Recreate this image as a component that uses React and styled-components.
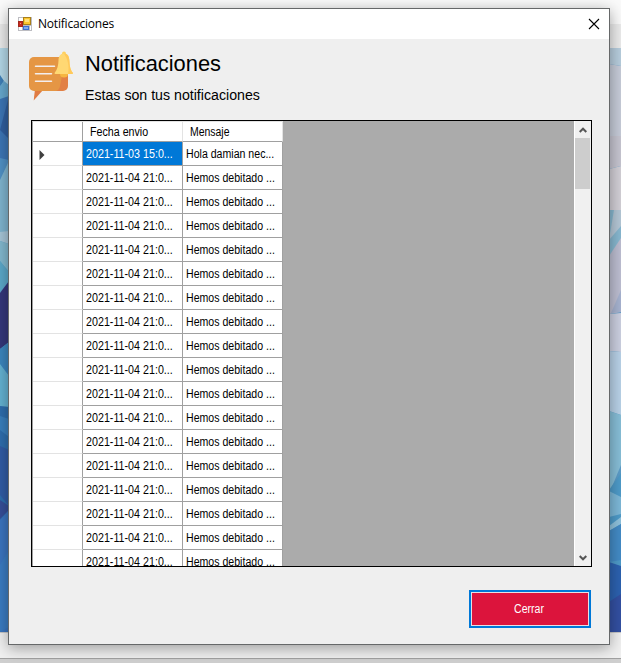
import React from "react";
import styled, { createGlobalStyle } from "styled-components";

const Global = createGlobalStyle`
  * { box-sizing: border-box; }
  body { margin: 0; overflow: hidden; font-family: "Liberation Sans", Arial, sans-serif; color: #000; }
`;

const Desktop = styled.div`
  position: relative;
  width: 621px;
  height: 663px;
  overflow: hidden;
  display: flex;
  flex-direction: column;
`;
const Strip = styled.div`
  height: ${(p) => p.$h}px;
  flex: none;
  background: ${(p) => p.$bg};
`;
const Wallpaper = styled.svg`
  display: block;
  flex: none;
  background: #5c9cc8;
`;

const Dialog = styled.section`
  position: absolute;
  left: 8px;
  top: 8px;
  width: 602px;
  height: 637px;
  border: 1px solid #666869;
  background: #efefef;
  box-shadow: 0 3px 14px rgba(0, 0, 0, 0.36);
  display: flex;
  flex-direction: column;
`;
const TitleBar = styled.header`
  height: 30px;
  flex: none;
  background: #fff;
  display: flex;
  align-items: center;
  padding: 0 9px;
`;
const Caption = styled.span`
  flex: 1;
  margin-left: 6px;
  font: 12px/16px "Open Sans", sans-serif;
  letter-spacing: -0.2px;
`;
const Heading = styled.div`
  height: 81px;
  flex: none;
  display: flex;
  padding: 11px 0 0 18px;
`;
const HeadingText = styled.div`
  padding-left: 11px;
`;
const Squeeze = styled.span`
  display: inline-block;
  white-space: pre;
  transform: scaleX(${(p) => p.$x || 1});
  transform-origin: ${(p) => p.$from || "left"} center;
`;
const Title = styled.h1`
  margin: 0;
  font-size: 22px;
  font-weight: 400;
  line-height: 28px;
`;
const Subtitle = styled.p`
  margin: 7px 0 0;
  font-size: 14.7px;
  line-height: 20px;
`;

const Grid = styled.div`
  width: 561px;
  height: 447px;
  flex: none;
  margin-left: 22px;
  border: 1px solid #000;
  background: #ababab;
  display: flex;
  justify-content: space-between;
  overflow: hidden;
`;
const Table = styled.div`
  width: 251px;
  border-left: 1px solid #a0a0a0;
  border-top: 1px solid #e3e3e3;
`;
const Row = styled.div`
  display: grid;
  grid-template-columns: 50px 100px 100px;
  grid-template-rows: 100%;
  height: ${(p) => (p.$head ? 20 : 24)}px;
  background: #fff;
  font-size: 12px;
  line-height: ${(p) => (p.$head ? 20 : 24)}px;
`;
const HeadCell = styled.div`
  padding-left: 7px;
  border-right: 1px solid ${(p) => p.$line || "#e3e3e3"};
  border-bottom: 1px solid #a0a0a0;
`;
const RowHeader = styled.div`
  padding: 8px 0 0 6px;
  border-right: 1px solid #a0a0a0;
  border-bottom: 1px solid #e3e3e3;
  line-height: 0;
`;
const Cell = styled.div`
  padding-left: 3px;
  overflow: hidden;
  border-right: 1px solid #a0a0a0;
  border-bottom: 1px solid #a0a0a0;
  background: ${(p) => (p.$selected ? "#0078d7" : "#fff")};
  color: ${(p) => (p.$selected ? "#fff" : "#000")};
`;
const ScrollBar = styled.div`
  width: 17px;
  background: #f0f0f0;
  border-left: 1px solid #fff;
  display: flex;
  flex-direction: column;
`;
const Arrow = styled.div`
  height: 17px;
  display: flex;
  align-items: center;
  justify-content: center;
`;
const Thumb = styled.div`
  height: 51px;
  width: 15px;
  background: #cdcdcd;
`;
const Gap = styled.div`
  flex: 1;
`;
const Footer = styled.footer`
  display: flex;
  justify-content: flex-end;
  padding: 23px 18px 0 0;
`;
const CloseButton = styled.button`
  width: 122px;
  height: 38px;
  padding: 0 2px 0 0;
  border: 2px solid #0078d7;
  background: #dc143c;
  box-shadow: inset 0 0 0 1px #e8dfe3;
  color: #fff;
  font: 12px "Liberation Sans", Arial, sans-serif;
`;

const AppIcon = () => (
  <svg width="14" height="14" viewBox="0 0 14 14" shapeRendering="crispEdges">
    <path d="M0 0h14v14H0z" fill="#bdbdc2" />
    <path d="M1 1h4v3H1zM1 10h3v3H1zM12 9h1v4h-1z" fill="#fff" />
    <path d="M0 4h5v6H0z" fill="#a3271c" />
    <path d="M1 5h3v4H1z" fill="#c8291c" />
    <path d="M2 6h1v1H2z" fill="#f39a80" />
    <path d="M5 0h8v8H5z" fill="#a9801a" />
    <path d="M6 1h6v6H6z" fill="#fcc62e" />
    <path d="M7 2h4v3H7z" fill="#ffe07a" />
    <path d="M5 9h6v4H5z" fill="#3c70d0" />
    <path d="M6 10h4v2H6z" fill="#7faaf0" />
  </svg>
);

const BellIcon = () => (
  <svg width="47" height="52" viewBox="27 50 47 52">
    <path d="M35 89L33.700 100.500L43 90z" fill="#e07b43" />
    <path d="M60 57h3a5 5 0 0 1 5 5v24a5 5 0 0 1-5 5h-8z" fill="#e28045" />
    <path d="M34 57h28v19l-2 10q-1 5-5 5H34a5 5 0 0 1-5-5V62a5 5 0 0 1 5-5z" fill="#e59644" />
    <path d="M35.5 66.3h19M35.5 73.7h16M35.5 81.3h16" stroke="#f3eeee" strokeWidth="1.5" strokeLinecap="round" />
    <path d="M60 74h8a4 3.5 0 0 1-8 0z" fill="#f7b641" />
    <circle cx="64" cy="53.3" r="1.9" fill="#ffd15c" />
    <path d="M64 53.5c-4 0-5.3 3-5.5 7-.2 5-1 9-4 12.500q0 1 1 1H72q1 0 1-1c-3-3.500-3.300-7.500-3.600-12.500-.3-4-1.400-7-5.400-7z" fill="#ffd873" />
    <path d="M64 53.500c4 0 5.100 3 5.400 7 .3 5 .6 9 3.600 12.500q0 1-1 1h-4c1.500-8 0-14-4-20.500z" fill="#ffc95a" />
  </svg>
);

const shapes = [
  ["#b4d8e8", "0,48 9,48 9,84 0,84"],
  ["#3f7fb8", "0,75 4,81 0,87"],
  ["#67a9cf", "0,86 4,81 9,85 9,97 0,100"],
  ["#3d76b6", "0,99 9,96 9,161 0,160"],
  ["#305f9f", "9,96 9,139 0,130"],
  ["#5091c6", "0,158 9,160 0,181"],
  ["#80b5d0", "0,180 9,161 9,232 0,232"],
  ["#a7c6d8", "0,232 9,231 9,244 0,241"],
  ["#83b9cf", "0,241 9,244 9,272 0,261"],
  ["#5ca9ca", "0,261 9,272 9,281 0,292"],
  ["#34377b", "0,293 9,281 9,342 0,349"],
  ["#3c86be", "0,349 9,342 9,377 0,365"],
  ["#64b2d2", "0,364 9,376 9,407 0,406"],
  ["#2e6eae", "0,406 9,407 9,632 0,632"],
  ["#397fbd", "0,416 9,419 9,437 0,430"],
  ["#315ca5", "0,446 9,450 9,506 0,495"],
  ["#374f99", "0,500 9,506 9,510 0,519"],
  ["#3b75c0", "0,520 9,510 9,632 0,632"],
  ["#3a7cc2", "0,565 9,550 9,627 0,632"],
  ["#b7cddd", "609,48 621,48 621,66 609,64"],
  ["#c6cbd8", "609,64 621,66 621,136 609,136"],
  ["#c6c5d0", "609,136 621,136 621,166 609,169"],
  ["#d2cfd6", "609,169 621,166 621,210 609,210"],
  ["#88b8d0", "609,210 621,210 621,242 609,256"],
  ["#b4c7d6", "614,210 621,210 621,226 609,240"],
  ["#bdbed1", "609,256 621,238 621,312 609,314"],
  ["#a7b3d0", "621,290 621,312 611,313"],
  ["#cbcfe0", "609,314 621,313 621,352 609,351"],
  ["#b8d1e7", "609,351 621,352 621,415 609,411"],
  ["#87bed7", "609,411 621,415 621,465 609,494"],
  ["#4e9bc9", "609,490 621,473 621,566 609,562"],
  ["#7db8d8", "609,491 621,497 621,514 609,517"],
  ["#8fc2dd", "609,526 621,517 621,524 609,531"],
  ["#438bc6", "609,531 621,524 621,560 609,562"],
  ["#2c62b0", "609,562 621,566 621,632 609,632"],
  ["#3350a2", "609,602 621,594 621,632 609,632"],
];

const dates = ["2021-11-03 15:0...", ...Array(17).fill("2021-11-04 21:0...")];

export default function App() {
  return (
    <>
      <Global />
      <Desktop>
        <Strip $h={24} $bg="#fafafa" />
        <Strip $h={24} $bg="#ebebeb" />
        <Wallpaper width="621" height="584" viewBox="0 48 621 584">
          {shapes.map(([fill, points]) => (
            <polygon key={points} fill={fill} points={points} />
          ))}
        </Wallpaper>
        <Strip $h={1} $bg="#c8c8c8" />
        <Strip $h={25} $bg="#f0f0f0" />
        <Strip $h={1} $bg="#a0a0a0" />
        <Strip $h={4} $bg="#cfcfcf" />
        <Dialog>
          <TitleBar>
            <AppIcon />
            <Caption>Notificaciones</Caption>
            <svg width="12" height="12" viewBox="0 0 12 12">
              <path d="M1 1L11 11M11 1L1 11" stroke="#000" strokeWidth="1.1" />
            </svg>
          </TitleBar>
          <Heading>
            <BellIcon />
            <HeadingText>
              <Title><Squeeze $x={0.993}>Notificaciones</Squeeze></Title>
              <Subtitle><Squeeze $x={0.965}>Estas son tus notificaciones</Squeeze></Subtitle>
            </HeadingText>
          </Heading>
          <Grid>
            <Table>
              <Row $head>
                <HeadCell $line="#a0a0a0" />
                <HeadCell><Squeeze $x={0.89}>Fecha envio</Squeeze></HeadCell>
                <HeadCell><Squeeze $x={0.87}>Mensaje</Squeeze></HeadCell>
              </Row>
              {dates.map((date, i) => (
                <Row key={i}>
                  <RowHeader>
                    {i === 0 && (
                      <svg width="6" height="10" viewBox="0 0 6 10">
                        <path d="M0.500 0L5.500 5L0.500 10z" fill="#404040" />
                      </svg>
                    )}
                  </RowHeader>
                  <Cell $selected={i === 0}><Squeeze $x={0.893}>{date}</Squeeze></Cell>
                  <Cell>
                    <Squeeze $x={0.882}>{i === 0 ? "Hola damian nec..." : "Hemos debitado ..."}</Squeeze>
                  </Cell>
                </Row>
              ))}
            </Table>
            <ScrollBar>
              <Arrow>
                <svg width="8" height="6" viewBox="0 0 8 6">
                  <path d="M0.700 5L4 1.700L7.300 5" fill="none" stroke="#555" strokeWidth="2" />
                </svg>
              </Arrow>
              <Thumb />
              <Gap />
              <Arrow>
                <svg width="8" height="6" viewBox="0 0 8 6">
                  <path d="M0.700 1L4 4.300L7.300 1" fill="none" stroke="#555" strokeWidth="2" />
                </svg>
              </Arrow>
            </ScrollBar>
          </Grid>
          <Footer>
            <CloseButton><Squeeze $x={0.88} $from="center">Cerrar</Squeeze></CloseButton>
          </Footer>
        </Dialog>
      </Desktop>
    </>
  );
}
